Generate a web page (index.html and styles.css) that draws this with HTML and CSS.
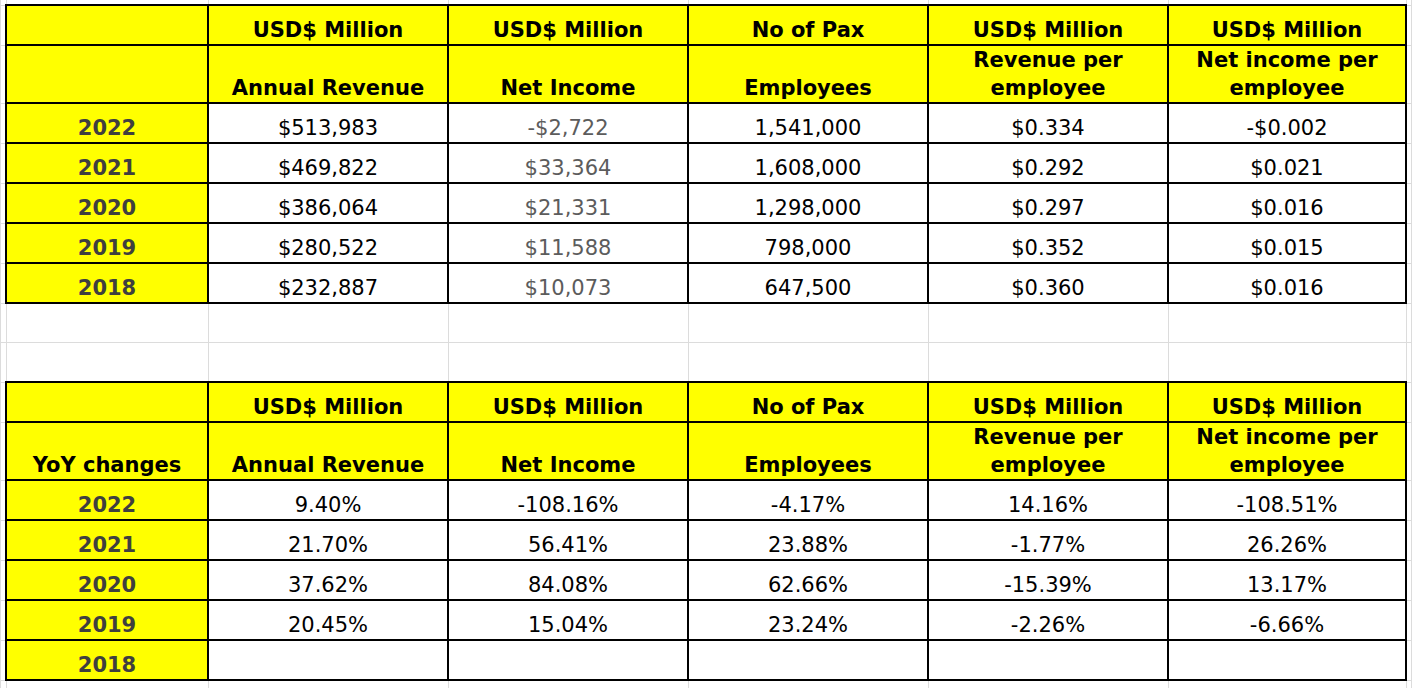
FILE: index.html
```html
<!DOCTYPE html>
<html>
<head>
<meta charset="utf-8">
<link rel="stylesheet" href="styles.css">
</head>
<body>
<table class="sheet">
  <colgroup>
    <col class="c-edge">
    <col class="c-year">
    <col class="c-val"><col class="c-val"><col class="c-val"><col class="c-val"><col class="c-last">
    <col class="c-edge">
  </colgroup>
  <tbody>
    <tr class="r-top"><td></td><td></td><td></td><td></td><td></td><td></td><td></td><td></td></tr>
    <tr class="r-h1">
      <td></td>
      <td class="hd"></td>
      <td class="hd">USD$ Million</td>
      <td class="hd">USD$ Million</td>
      <td class="hd">No of Pax</td>
      <td class="hd">USD$ Million</td>
      <td class="hd">USD$ Million</td>
      <td></td>
    </tr>
    <tr class="r-h2">
      <td></td>
      <td class="hd"></td>
      <td class="hd">Annual Revenue</td>
      <td class="hd">Net Income</td>
      <td class="hd">Employees</td>
      <td class="hd wrap">Revenue per<br>employee</td>
      <td class="hd wrap">Net income per<br>employee</td>
      <td></td>
    </tr>
    <tr class="r-d"><td></td><td class="yr">2022</td><td class="v">$513,983</td><td class="v grey">-$2,722</td><td class="v">1,541,000</td><td class="v">$0.334</td><td class="v">-$0.002</td><td></td></tr>
    <tr class="r-d"><td></td><td class="yr">2021</td><td class="v">$469,822</td><td class="v grey">$33,364</td><td class="v">1,608,000</td><td class="v">$0.292</td><td class="v">$0.021</td><td></td></tr>
    <tr class="r-d"><td></td><td class="yr">2020</td><td class="v">$386,064</td><td class="v grey">$21,331</td><td class="v">1,298,000</td><td class="v">$0.297</td><td class="v">$0.016</td><td></td></tr>
    <tr class="r-d"><td></td><td class="yr">2019</td><td class="v">$280,522</td><td class="v grey">$11,588</td><td class="v">798,000</td><td class="v">$0.352</td><td class="v">$0.015</td><td></td></tr>
    <tr class="r-d"><td></td><td class="yr">2018</td><td class="v">$232,887</td><td class="v grey">$10,073</td><td class="v">647,500</td><td class="v">$0.360</td><td class="v">$0.016</td><td></td></tr>
    <tr class="r-d"><td></td><td></td><td></td><td></td><td></td><td></td><td></td><td></td></tr>
    <tr class="r-d"><td></td><td></td><td></td><td></td><td></td><td></td><td></td><td></td></tr>
    <tr class="r-h1">
      <td></td>
      <td class="hd"></td>
      <td class="hd">USD$ Million</td>
      <td class="hd">USD$ Million</td>
      <td class="hd">No of Pax</td>
      <td class="hd">USD$ Million</td>
      <td class="hd">USD$ Million</td>
      <td></td>
    </tr>
    <tr class="r-h2">
      <td></td>
      <td class="hd">YoY changes</td>
      <td class="hd">Annual Revenue</td>
      <td class="hd">Net Income</td>
      <td class="hd">Employees</td>
      <td class="hd wrap">Revenue per<br>employee</td>
      <td class="hd wrap">Net income per<br>employee</td>
      <td></td>
    </tr>
    <tr class="r-d"><td></td><td class="yr">2022</td><td class="v">9.40%</td><td class="v">-108.16%</td><td class="v">-4.17%</td><td class="v">14.16%</td><td class="v">-108.51%</td><td></td></tr>
    <tr class="r-d"><td></td><td class="yr">2021</td><td class="v">21.70%</td><td class="v">56.41%</td><td class="v">23.88%</td><td class="v">-1.77%</td><td class="v">26.26%</td><td></td></tr>
    <tr class="r-d"><td></td><td class="yr">2020</td><td class="v">37.62%</td><td class="v">84.08%</td><td class="v">62.66%</td><td class="v">-15.39%</td><td class="v">13.17%</td><td></td></tr>
    <tr class="r-d"><td></td><td class="yr">2019</td><td class="v">20.45%</td><td class="v">15.04%</td><td class="v">23.24%</td><td class="v">-2.26%</td><td class="v">-6.66%</td><td></td></tr>
    <tr class="r-d"><td></td><td class="yr">2018</td><td class="v"></td><td class="v"></td><td class="v"></td><td class="v"></td><td class="v"></td><td></td></tr>
    <tr class="r-d"><td></td><td></td><td></td><td></td><td></td><td></td><td></td><td></td></tr>
  </tbody>
</table>
</body>
</html>
```

FILE: styles.css
```css
html, body {
  margin: 0;
  padding: 0;
  background: #ffffff;
  overflow: hidden;
}

.sheet {
  border-collapse: collapse;
  table-layout: fixed;
  font-family: "DejaVu Sans", "Liberation Sans", sans-serif;
  font-size: 21px;
  color: #000;
}

.c-edge { width: 3px; }
.c-year { width: 202px; }
.c-val { width: 240px; }
.c-last { width: 238px; }

.sheet td {
  border: 1px solid #dcdcdc;
  padding: 0 2px 2px;
  text-align: center;
  vertical-align: bottom;
  line-height: 24px;
  white-space: nowrap;
  overflow: hidden;
}

.r-top td { height: 4px; padding: 0; border-top: none; }
.r-h1 td { height: 36px; }
.r-h2 td { height: 54px; }
.r-d td { height: 36px; }

.sheet td.hd {
  background: #ffff00;
  font-weight: bold;
  border: 2px solid #000;
}

.sheet td.wrap {
  height: auto;
  padding-bottom: 0;
  line-height: 28px;
}

.sheet td.yr {
  background: #ffff00;
  font-weight: bold;
  color: #3f3f3f;
  border: 2px solid #000;
}

.sheet td.v {
  border: 2px solid #000;
}

.sheet td.grey {
  color: #5c5c5c;
}
```
